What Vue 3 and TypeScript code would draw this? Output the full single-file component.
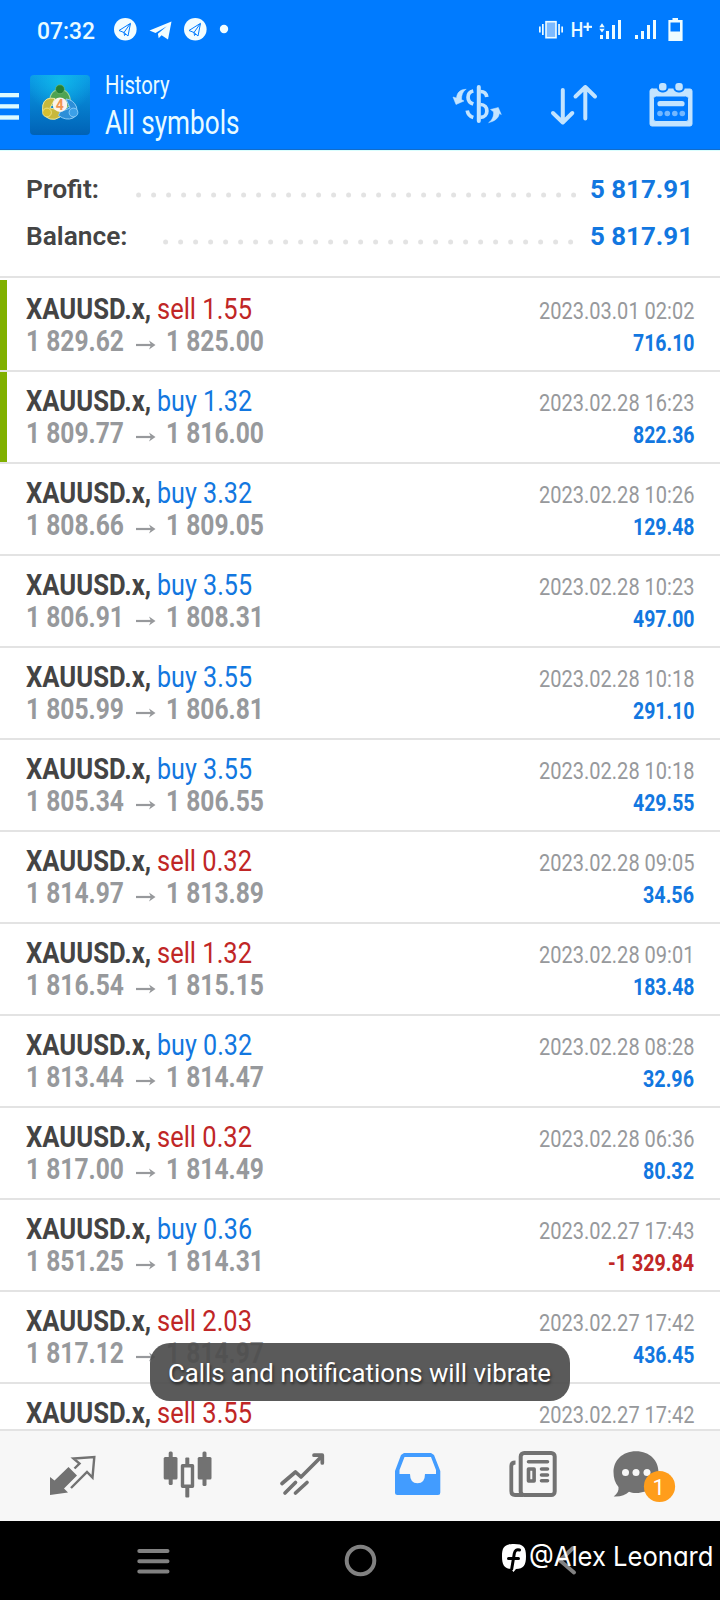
<script setup lang="ts">
type Deal = { side: 'buy' | 'sell'; lots: string; from: string; to: string; time: string; profit: string; fresh?: boolean }

const deals: Deal[] = [
  { side: 'sell', lots: '1.55', from: '1 829.62', to: '1 825.00', time: '2023.03.01 02:02', profit: '716.10', fresh: true },
  { side: 'buy', lots: '1.32', from: '1 809.77', to: '1 816.00', time: '2023.02.28 16:23', profit: '822.36', fresh: true },
  { side: 'buy', lots: '3.32', from: '1 808.66', to: '1 809.05', time: '2023.02.28 10:26', profit: '129.48' },
  { side: 'buy', lots: '3.55', from: '1 806.91', to: '1 808.31', time: '2023.02.28 10:23', profit: '497.00' },
  { side: 'buy', lots: '3.55', from: '1 805.99', to: '1 806.81', time: '2023.02.28 10:18', profit: '291.10' },
  { side: 'buy', lots: '3.55', from: '1 805.34', to: '1 806.55', time: '2023.02.28 10:18', profit: '429.55' },
  { side: 'sell', lots: '0.32', from: '1 814.97', to: '1 813.89', time: '2023.02.28 09:05', profit: '34.56' },
  { side: 'sell', lots: '1.32', from: '1 816.54', to: '1 815.15', time: '2023.02.28 09:01', profit: '183.48' },
  { side: 'buy', lots: '0.32', from: '1 813.44', to: '1 814.47', time: '2023.02.28 08:28', profit: '32.96' },
  { side: 'sell', lots: '0.32', from: '1 817.00', to: '1 814.49', time: '2023.02.28 06:36', profit: '80.32' },
  { side: 'buy', lots: '0.36', from: '1 851.25', to: '1 814.31', time: '2023.02.27 17:43', profit: '-1 329.84' },
  { side: 'sell', lots: '2.03', from: '1 817.12', to: '1 814.97', time: '2023.02.27 17:42', profit: '436.45' },
]
const lastDeal = { side: 'sell', lots: '3.55', time: '2023.02.27 17:42' }

const profitWidth: Record<number, number> = { 5: 51, 6: 61.5, 9: 86 }

// Condenses a label horizontally so that it takes the given width.
const vFit = {
  mounted(el: HTMLElement, binding: { value: number }) {
    const natural = el.getBoundingClientRect().width
    el.style.transform = `scaleX(${binding.value / natural})`
    el.style.marginRight = `${binding.value - natural}px`
  },
}
</script>

<template>
  <div class="screen">
    <header class="top">
      <div class="status">
        <span v-fit="58" class="clock fit">07:32</span>
        <svg class="notif" width="120" height="30" viewBox="112 14 120 30">
          <g v-for="x in [125.3, 195.3]" :key="x">
            <circle :cx="x" cy="29.3" r="11.3" fill="#f2fdff" />
            <path :transform="`translate(${x - 125.3} 0)`" d="M119 30.5 130.5 23.3 128 36 124 32.5ZM130 24 124 32.5 124.5 35.5 126 34" fill="none" stroke="#007bff" stroke-width="1" stroke-linejoin="round" />
          </g>
          <path d="M149.5 30.6 171.5 21.5 168 39.5 161.6 35.2 158.7 38.2 157.9 33.8 166.8 26.3 155.5 33Z" fill="#f2fdff" />
          <circle cx="224" cy="29" r="4.2" fill="#f2fdff" />
        </svg>
        <svg class="signal" width="150" height="30" viewBox="535 14 150 30" fill="#eefcff">
          <rect x="546" y="21.7" width="10" height="16" fill="#7cbaff" stroke="#eefcff" stroke-width="1.6" />
          <rect x="542" y="24" width="1.7" height="11" /><rect x="539" y="26.5" width="1.7" height="6" />
          <rect x="558.2" y="24" width="1.7" height="11" /><rect x="561.3" y="26.5" width="1.7" height="6" />
          <text x="570.8" y="36.7" font-size="20.5" font-weight="500" textLength="12.5" lengthAdjust="spacingAndGlyphs">H</text>
          <rect x="583.5" y="25.8" width="8.5" height="2.1" /><rect x="586.7" y="22.5" width="2.1" height="8.5" />
          <path d="M599.3 27.3 602 23.3 604.7 27.3ZM599.3 28.7 602 32.5 604.7 28.7Z" />
          <rect x="600" y="35" width="3" height="4" /><rect x="606" y="31" width="3" height="8" /><rect x="612" y="25" width="3" height="14" /><rect x="618" y="20" width="3" height="19" />
          <rect x="635" y="35" width="3" height="4" /><rect x="641" y="31" width="3" height="8" /><rect x="647" y="25" width="3" height="14" /><rect x="653" y="20" width="3" height="19" />
          <path fill-rule="evenodd" d="M672.5 18h5.5v2h4.6v21h-14.2V20h4.1ZM670.5 22.5v9h9.5v-9Z" />
        </svg>
      </div>
      <div class="appbar">
        <svg class="menu" width="20" height="60" viewBox="0 75 20 60" fill="#ddfaff">
          <rect y="93" width="19" height="4.3" /><rect y="104.2" width="19" height="4.3" /><rect y="115.3" width="19" height="4.4" />
        </svg>
        <svg class="logo" width="60" height="60" viewBox="0 0 60 60">
          <defs>
            <linearGradient id="bg" x1="0" y1="0" x2="0" y2="1"><stop offset="0" stop-color="#0b9be6" /><stop offset="1" stop-color="#0062b6" /></linearGradient>
            <radialGradient id="glow" cx=".5" cy=".1" r=".55"><stop offset="0" stop-color="#12c4ee" stop-opacity=".75" /><stop offset="1" stop-color="#12c4ee" stop-opacity="0" /></radialGradient>
          </defs>
          <rect width="60" height="60" rx="4" fill="url(#bg)" /><rect width="60" height="60" rx="4" fill="url(#glow)" />
          <path d="M20 30C18.5 20 23 14.5 30 14.5S41 20 40.5 30L35 34 30 24 25 31Z" fill="#4fa351" stroke="#a4d69d" stroke-width="1.1" />
          <path d="M25 23.5Q15 21.5 12.8 30 11 41 20 44 25 45.5 30 42L34 36 20 33Z" fill="#c8b83c" stroke="#ede89d" stroke-width="1" />
          <path d="M36 24Q43.5 24.5 46.5 32 48.5 40 43 43 36 46 28.5 40.5L30 37 40 33Z" fill="#2d8fd8" stroke="#8cccf7" stroke-width="1" />
          <circle cx="30" cy="14.3" r="4.5" fill="#257f35" stroke="#80c27d" stroke-width=".6" />
          <circle cx="17" cy="37.5" r="4.4" fill="#d6bf32" stroke="#f2e994" stroke-width=".8" />
          <circle cx="43.5" cy="37.5" r="4.4" fill="#3ba0e8" stroke="#9ad4fb" stroke-width=".8" />
          <circle cx="30" cy="29.7" r="7.3" fill="#fbf3ec" />
          <text x="29.8" y="34.8" text-anchor="middle" font-size="14" font-weight="700" fill="#f19450">4</text>
        </svg>
        <div class="titles">
          <div class="title"><span v-fit="64.5" class="fit">History</span></div>
          <div class="subtitle"><span v-fit="134.5" class="fit">All symbols</span></div>
        </div>
        <svg class="tools" width="250" height="50" viewBox="450 80 250 50" fill="none" stroke="#c3e4ff" stroke-linecap="round" stroke-linejoin="round">
          <path d="M478.8 87V121" stroke-width="4" />
          <path d="M473.3 91C466.3 92.5 466.3 101.5 473.3 104M467.2 110.5C468 115 470 116.5 473.3 117.5M480.5 91.5C484 91.5 486.3 93.5 486.8 97M480.5 104.5C489 104.5 489 117.3 480.5 117.3" stroke-width="3.7" stroke-linecap="butt" />
          <path d="M465.8 89.3C459 89.5 457 93.5 456.5 98L453 97 456 104.5 464 101 461.5 99.5C461.5 95.5 462.5 92 465.8 89.3ZM489 122.5C496 121 499 117 499.3 113.5L501.3 114.5 498.3 107.5 490.5 109.5 493.5 111.8C494 116.5 492 120 489 122.5Z" fill="#c3e4ff" stroke-width=".5" />
          <path d="M562.8 90V122M553 113 562.8 122.5 572.3 113M585.3 118.5V87M575.5 96.5 585.3 87 595 96.5" stroke-width="4" />
          <path d="M652 89H690Q692 89 692 91V124Q692 126 690 126H652Q650 126 650 124V91Q650 89 652 89ZM656 96Q653.5 96 653.5 98.5V119Q653.5 121.5 656 121.5H686Q688.5 121.5 688.5 119V98.5Q688.5 96 686 96Z" fill="#c3e4ff" fill-rule="evenodd" stroke="#c3e4ff" stroke-width="1" />
          <rect x="658" y="82" width="9.5" height="9.5" rx="4" fill="#c3e4ff" stroke="#007bff" stroke-width="2" />
          <rect x="674.3" y="82" width="9.5" height="9.5" rx="4" fill="#c3e4ff" stroke="#007bff" stroke-width="2" />
          <path d="M660 103.7H682" stroke-width="5.2" />
          <circle v-for="x in [660, 667.3, 674.8, 682.3]" :key="x" :cx="x" cy="113.5" r="2.8" fill="#73b8ff" stroke="none" />
        </svg>
      </div>
    </header>

    <section class="summary">
      <div class="sum">
        <b v-fit="73" class="fit key">Profit:</b>
        <svg class="dots" width="440" height="6" viewBox="0 0 440 6"><circle v-for="n in 30" :key="n" :cx="2.6 + (n - 1) * 15" cy="3" r="2.5" /></svg>
        <b v-fit="103" class="fit val">5 817.91</b>
      </div>
      <div class="sum">
        <b v-fit="101.5" class="fit key">Balance:</b>
        <svg class="dots second" width="411" height="6" viewBox="0 0 411 6"><circle v-for="n in 28" :key="n" :cx="2.6 + (n - 1) * 15" cy="3" r="2.5" /></svg>
        <b v-fit="103" class="fit val">5 817.91</b>
      </div>
    </section>

    <main class="deals">
      <article v-for="(d, i) in deals" :key="i" class="deal" :class="{ fresh: d.fresh }">
        <div class="left">
          <div class="line"><b v-fit="125" class="fit sym">XAUUSD.x,</b><span v-fit="95" class="fit" :class="d.side">{{ d.side }} {{ d.lots }}</span></div>
          <div class="line prices">
            <b v-fit="98" class="fit">{{ d.from }}</b>
            <svg class="arrow" width="20" height="12" viewBox="0 0 20 12"><path d="M0 6H16" stroke="#97999c" stroke-width="2.2" /><path d="M13 1.5 19.5 6 13 10.5 15 6Z" fill="#97999c" /></svg>
            <b v-fit="98" class="fit">{{ d.to }}</b>
          </div>
        </div>
        <div class="right">
          <div class="line"><span v-fit="155.5" class="fit time">{{ d.time }}</span></div>
          <div class="line"><b v-fit="profitWidth[d.profit.length]" class="fit" :class="d.profit[0] === '-' ? 'sell' : 'buy'">{{ d.profit }}</b></div>
        </div>
      </article>
      <article class="deal last">
        <div class="left">
          <div class="line"><b v-fit="125" class="fit sym">XAUUSD.x,</b><span v-fit="95" class="fit sell">{{ lastDeal.side }} {{ lastDeal.lots }}</span></div>
        </div>
        <div class="right">
          <div class="line"><span v-fit="155.5" class="fit time">{{ lastDeal.time }}</span></div>
        </div>
      </article>
    </main>

    <nav class="tabs">
      <svg width="720" height="90" viewBox="0 1431 720 90" fill="none" stroke="#727272" stroke-linejoin="round">
        <path d="M68.5 1467 77 1475.5 64 1488.5 68 1492.5 50 1495V1477L54.5 1480.5Z" fill="#727272" stroke="none" />
        <path d="M74.5 1468.5 79.5 1463.5 73.5 1458.5 94.3 1457 92.5 1477.5 87 1472 71 1488" stroke-width="2.4" stroke-linejoin="miter" />
        <g fill="#727272" stroke="none">
          <rect x="163.7" y="1457" width="13.8" height="22.5" rx="1.5" /><rect x="168.7" y="1451.5" width="4" height="33.5" rx="1.5" />
          <rect x="197.7" y="1457" width="13.8" height="22.5" rx="1.5" /><rect x="202.5" y="1451.5" width="4" height="34.5" rx="1.5" />
          <rect x="185.3" y="1457.5" width="4" height="8" rx="1" /><rect x="185.3" y="1486" width="4" height="11.5" rx="1" />
        </g>
        <rect x="182.5" y="1465.7" width="10" height="20.6" stroke-width="3.4" />
        <path d="M282 1483.5 295.5 1472 301 1477 322 1456M314 1455.2H322.3V1463M285 1493 295.5 1482.5M295.5 1493 307 1482.5" stroke-width="3.7" stroke-linecap="round" />
        <path d="M404 1453H431L434 1455 440.3 1471V1492.5Q440.3 1495 438 1495H397.5Q395 1495 395 1492.5V1471L401 1455ZM404.5 1457 399.5 1470V1474H410Q410 1483.3 417.5 1483.3 425 1483.3 425 1474H436V1470L431 1457Z" fill="#429cff" fill-rule="evenodd" stroke="none" />
        <rect x="520.7" y="1453" width="34" height="42" rx="3.5" stroke-width="4" />
        <path d="M515.5 1462.5Q511.3 1462.5 511.3 1466V1491Q511.3 1495 515 1495H523" stroke-width="3.8" />
        <path d="M528.5 1461.8H547.5M541.5 1469H547.5M541.5 1475H547.5M541.5 1480.7H547.5" stroke-width="3.6" stroke-linecap="round" />
        <rect x="528.5" y="1469" width="5.6" height="12" stroke-width="3.6" />
        <path d="M636 1451.3C650 1451.3 658.5 1461 658.5 1472 658.5 1484 649.5 1493 636 1493 633 1493 631 1492.5 629 1491.7 625.5 1495 620.5 1497 613.7 1496.5 617.5 1493.5 619 1490.5 618.5 1487 615 1483 613.5 1478 613.5 1472 613.5 1461 622 1451.3 636 1451.3Z" fill="#727272" stroke="none" />
        <g fill="#f7f7f7" stroke="none"><circle cx="625.5" cy="1472.5" r="3.5" /><circle cx="636" cy="1472.5" r="3.5" /><circle cx="647" cy="1472.5" r="3.5" /></g>
        <circle cx="659.5" cy="1486.5" r="15.6" fill="#ff9d1b" stroke="none" />
        <text x="658.8" y="1494.5" text-anchor="middle" font-size="22" fill="#fff" stroke="none">1</text>
      </svg>
    </nav>
    <footer class="system">
      <svg width="720" height="79" viewBox="0 1521 720 79" fill="none" stroke="#818181" stroke-width="4" stroke-linecap="round">
        <path d="M139.3 1550.9H167.5M139.3 1561.3H167.5M139.3 1571.6H167.5" />
        <circle cx="360.5" cy="1560.5" r="13.8" />
        <path d="M573 1548 560 1560.5 574 1572.5" />
        <path d="M514 1544C523.5 1544 526 1547 526 1556.3 526 1565.5 523.5 1568.8 516 1569L513.5 1572 511 1569C504.5 1568.5 502 1565.5 502 1556.3 502 1547 504.5 1544 514 1544Z" fill="#fff" stroke="none" />
        <path d="M519.5 1550Q515.3 1548.8 514.3 1553.5L511.7 1569M508.5 1558.5H518.5" stroke="#000" stroke-width="3" />
        <text class="handle" x="529" y="1565.7" font-size="27.5" textLength="184.5" lengthAdjust="spacingAndGlyphs" fill="#fff" stroke="none">@Alex Leonard</text>
      </svg>
    </footer>

    <div class="toast"><span v-fit="383" class="fit">Calls and notifications will vibrate</span></div>
  </div>
</template>

<style>
body { margin: 0; }
</style>

<style scoped>
.screen { position: relative; width: 720px; height: 1600px; overflow: hidden; display: flex; flex-direction: column; background: #fff; font-family: Roboto, "Liberation Sans", sans-serif; }
.fit { display: inline-block; white-space: nowrap; transform-origin: left center; }
svg { display: block; flex: none; }
.top { height: 150px; box-sizing: border-box; background: #007bff; border-bottom: 1px solid #136cc9; color: #e9fbff; flex: none; }
.status { height: 60px; display: flex; align-items: center; padding-left: 37px; }
.clock { font-size: 23.5px; line-height: 60px; margin-top: 1px; font-weight: 500; }
.notif { margin-left: 17px; margin-top: -2px; }
.signal { margin: -2px 35px 0 auto; }
.appbar { display: flex; height: 89px; padding-right: 20px; }
.menu { margin-top: 15px; }
.logo { margin: 15px 0 0 10px; }
.titles { margin: 10px 0 0 15px; }
.title { height: 31px; line-height: 32px; font-size: 25px; }
.subtitle { height: 44px; line-height: 44px; font-size: 32.5px; }
.tools { margin: 20px 0 0 auto; }
.summary { height: 126px; box-sizing: border-box; padding-top: 14px; border-top: 1px solid #d9ffff; flex: none; }
.sum { display: flex; align-items: center; height: 47px; padding: 0 27px 0 26px; font-size: 26.5px; line-height: 47px; }
.key { color: #444; font-weight: 600; }
.val { color: #1277e0; }
.dots { margin: 12px 0 0 auto; fill: #e3e3e3; }
.dots + .val { margin-left: 14.5px; }
.dots.second + .val { margin-left: 16.5px; }
.deals { height: 1153px; flex: none; overflow: hidden; border-top: 2px solid #e3e3e3; box-sizing: border-box; padding-top: 2px; }
.deal { height: 92px; box-sizing: border-box; border-bottom: 2px solid #e3e3e3; display: flex; justify-content: space-between; padding: 0 26px 0 26px; background: #fff; }
.last { height: 45px; border-bottom: 0; }
.fresh { background: linear-gradient(90deg, #80b000 7.5px, #fff 7.5px); }
.line { height: 32px; line-height: 32px; white-space: nowrap; display: flex; }
.left { padding-top: 12.5px; font-size: 30px; }
.right { padding-top: 15px; font-size: 24.5px; display: flex; flex-direction: column; align-items: flex-end; }
.sym { color: #444; }
.left .line:first-child { gap: 6px; }
.prices { color: #97999c; }
.arrow { margin: 14.5px 10px 0 12px; }
.time { color: #97999c; }
.buy { color: #1277e0; }
.sell { color: #c02626; }
.tabs { height: 92px; box-sizing: border-box; border-top: 2px solid #e3e3e3; background: #f7f7f7; flex: none; }
.system { height: 79px; background: #000; flex: none; }
.handle { font-family: Inter, Roboto, sans-serif; font-feature-settings: "cv11"; }
.toast { position: absolute; left: 150px; top: 1343px; width: 420px; height: 57.5px; box-sizing: border-box; padding-left: 17.5px; border-radius: 20px; background: rgba(76, 76, 76, .92); color: #fff; font-size: 26.5px; line-height: 60px; text-shadow: 1px 2px 3px rgba(0, 0, 0, .6); }
</style>
